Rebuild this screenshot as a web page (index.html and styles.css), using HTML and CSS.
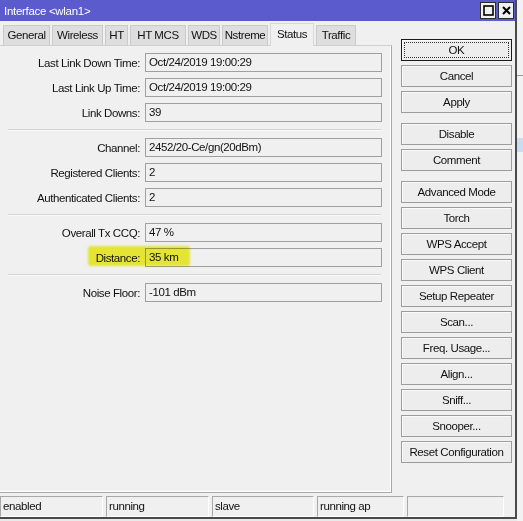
FILE: index.html
```html
<!DOCTYPE html>
<html>
<head>
<meta charset="utf-8">
<link rel="stylesheet" href="styles.css">
</head>
<body>
<div class="backdrop">
  <div class="bg-line bg-line-1"></div>
  <div class="bg-band"></div>
</div>
<div class="window">
  <div class="titlebar">
    <span class="title">Interface &lt;wlan1&gt;</span>
    <div class="tbtns">
      <span class="tbtn"><svg width="11" height="11" viewBox="0 0 11 11"><rect x="1" y="1" width="9" height="9" fill="none" stroke="#000" stroke-width="1.6"/></svg></span>
      <span class="tbtn"><svg width="11" height="11" viewBox="0 0 11 11"><path d="M2 2 L9 9 M9 2 L2 9" stroke="#000" stroke-width="2"/></svg></span>
    </div>
  </div>
  <div class="main">
    <div class="left">
      <div class="tabs">
        <span class="tab t-general">General</span>
        <span class="tab t-wireless">Wireless</span>
        <span class="tab t-ht">HT</span>
        <span class="tab t-htmcs">HT MCS</span>
        <span class="tab t-wds">WDS</span>
        <span class="tab t-nstreme">Nstreme</span>
        <span class="tab t-status active">Status</span>
        <span class="tab t-traffic">Traffic</span>
      </div>
      <div class="panel">
        <div class="row"><label>Last Link Down Time:</label><div class="field">Oct/24/2019 19:00:29</div></div>
        <div class="row"><label>Last Link Up Time:</label><div class="field">Oct/24/2019 19:00:29</div></div>
        <div class="row"><label>Link Downs:</label><div class="field">39</div></div>
        <div class="sep"></div>
        <div class="row"><label>Channel:</label><div class="field">2452/20-Ce/gn(20dBm)</div></div>
        <div class="row"><label>Registered Clients:</label><div class="field">2</div></div>
        <div class="row"><label>Authenticated Clients:</label><div class="field">2</div></div>
        <div class="sep"></div>
        <div class="row"><label>Overall Tx CCQ:</label><div class="field">47 %</div></div>
        <div class="row hl-row"><span class="highlight"></span><label>Distance:</label><div class="field">35 km</div></div>
        <div class="sep"></div>
        <div class="row"><label>Noise Floor:</label><div class="field">-101 dBm</div></div>
      </div>
    </div>
    <div class="buttons">
      <div class="btn focus"><span>OK</span></div>
      <div class="btn">Cancel</div>
      <div class="btn">Apply</div>
      <div class="btn group">Disable</div>
      <div class="btn">Comment</div>
      <div class="btn group">Advanced Mode</div>
      <div class="btn">Torch</div>
      <div class="btn">WPS Accept</div>
      <div class="btn">WPS Client</div>
      <div class="btn">Setup Repeater</div>
      <div class="btn">Scan...</div>
      <div class="btn">Freq. Usage...</div>
      <div class="btn">Align...</div>
      <div class="btn">Sniff...</div>
      <div class="btn">Snooper...</div>
      <div class="btn">Reset Configuration</div>
    </div>
  </div>
  <div class="statusbar">
    <div class="seg s1">enabled</div>
    <div class="seg s2">running</div>
    <div class="seg s3">slave</div>
    <div class="seg s4">running ap</div>
    <div class="seg s5"></div>
  </div>
</div>
</body>
</html>
```

FILE: styles.css
```css
html, body {
  margin: 0;
  padding: 0;
}
body {
  width: 523px;
  height: 521px;
  overflow: hidden;
  background: #e9e9e9;
  position: relative;
  font-family: "Liberation Sans", Arial, sans-serif;
  font-size: 11.5px;
  letter-spacing: -0.4px;
  color: #111;
}
.backdrop {
  position: absolute;
  left: 517px;
  top: 0;
  width: 6px;
  height: 521px;
  background: #f2f2f2;
}
.bg-line-1 {
  position: absolute;
  left: 0;
  top: 75px;
  width: 6px;
  height: 1px;
  background: #9a9a9a;
}
.bg-band {
  position: absolute;
  left: 0;
  top: 138px;
  width: 6px;
  height: 14px;
  background: #c9dcf0;
}
.window {
  position: relative;
  width: 515px;
  height: 517px;
  background: #f0f0f0;
  border-right: 2px solid #4a4a4a;
  border-bottom: 2px solid #4a4a4a;
  display: flex;
  flex-direction: column;
}
.titlebar {
  height: 21px;
  background: #5b5bcd;
  display: flex;
  align-items: center;
  justify-content: space-between;
  padding-left: 4px;
  padding-right: 1px;
  box-sizing: border-box;
}
.title {
  color: #fff;
  font-size: 11.5px;
  letter-spacing: -0.3px;
}
.tbtns {
  display: flex;
  gap: 2px;
}
.tbtn {
  width: 14px;
  height: 15px;
  background: #f0f0f0;
  border: 1px solid #2c2c2c;
  display: flex;
  align-items: center;
  justify-content: center;
}
.main {
  display: flex;
  height: 474px;
}
.left {
  width: 392px;
  display: flex;
  flex-direction: column;
}
.tabs {
  height: 24px;
  display: flex;
  align-items: flex-end;
  padding-left: 3px;
  gap: 2px;
  box-sizing: border-box;
}
.tab {
  height: 20px;
  line-height: 19px;
  background: #dedede;
  border: 1px solid #cacaca;
  border-bottom: none;
  box-sizing: border-box;
  text-align: center;
  white-space: nowrap;
}
.t-general { width: 47px; }
.t-wireless { width: 51px; }
.t-ht { width: 23px; }
.t-htmcs { width: 56px; }
.t-wds { width: 32px; }
.t-nstreme { width: 46px; }
.t-status { width: 44px; }
.t-traffic { width: 40px; }
.tab.active {
  height: 23px;
  line-height: 20px;
  background: #f0f0f0;
  margin-bottom: -1px;
  position: relative;
  z-index: 1;
  border-color: #d8d8d8;
}
.panel {
  height: 448px;
  box-sizing: border-box;
  border-top: 1px solid #d0d0d0;
  border-right: 1px solid #a8a8a8;
  border-bottom: 1px solid #a8a8a8;
  box-shadow: inset -1px -1px 0 #ffffff;
  padding-top: 7px;
  display: flex;
  flex-direction: column;
  gap: 6px;
}
.row {
  display: flex;
  align-items: center;
  height: 19px;
  position: relative;
}
.row label {
  width: 145px;
  padding-right: 5px;
  box-sizing: border-box;
  text-align: right;
  white-space: nowrap;
}
.field {
  width: 237px;
  height: 19px;
  box-sizing: border-box;
  border: 1px solid #a0a0a0;
  background: #f0f0f0;
  padding-left: 3px;
  line-height: 17px;
}
.sep {
  height: 1px;
  background: #d4d4d4;
  border-bottom: 1px solid #fafafa;
  margin: 1px 10px 1px 8px;
}
.highlight {
  position: absolute;
  left: 88px;
  top: -2px;
  width: 102px;
  height: 20px;
  background: #f3f33a;
  border-radius: 3px;
  filter: blur(0.8px);
  mix-blend-mode: multiply;
  z-index: 2;
}
.buttons {
  margin-left: 9px;
  padding-top: 18px;
  display: flex;
  flex-direction: column;
  gap: 4px;
}
.btn {
  width: 111px;
  height: 22px;
  box-sizing: border-box;
  border: 1px solid #9c9c9c;
  background: #ededed;
  box-shadow: inset 1px 1px 0 #fafafa;
  display: flex;
  align-items: center;
  justify-content: center;
  white-space: nowrap;
}
.btn.group {
  margin-top: 6px;
}
.btn.focus {
  border: 1px solid #1a1a1a;
  padding: 2px;
}
.btn.focus span {
  width: 100%;
  height: 100%;
  box-sizing: border-box;
  border: 1px dotted #333;
  display: flex;
  align-items: center;
  justify-content: center;
}
.statusbar {
  height: 22px;
  display: flex;
  gap: 3px;
  padding-top: 1px;
  box-sizing: border-box;
}
.seg {
  height: 21px;
  box-sizing: border-box;
  border-top: 1px solid #a8a8a8;
  border-left: 1px solid #a8a8a8;
  border-right: 1px solid #fff;
  border-bottom: 1px solid #fff;
  padding-left: 2px;
  line-height: 19px;
}
.s1 { width: 103px; }
.s2 { width: 103px; }
.s3 { width: 102px; }
.s4 { width: 87px; }
.s5 { width: 97px; }
```
